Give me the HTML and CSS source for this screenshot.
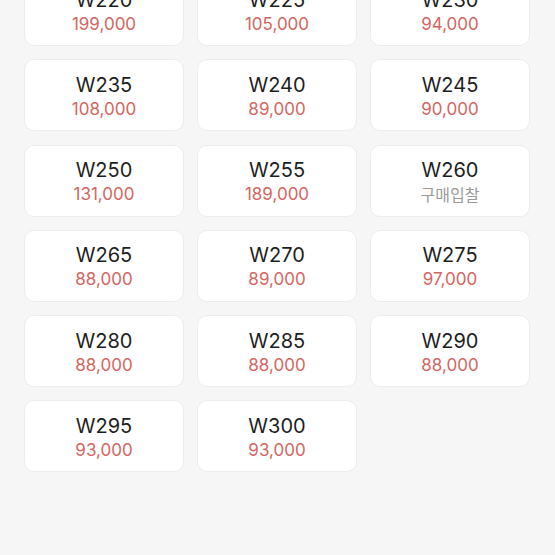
FILE: index.html
```html
<!DOCTYPE html>
<html lang="ko">
<head>
<meta charset="utf-8">
<link rel="stylesheet" href="styles.css">
</head>
<body>
<div class="grid">
  <div class="card"><div class="size">W220</div><div class="price">199,000</div></div>
  <div class="card"><div class="size">W225</div><div class="price">105,000</div></div>
  <div class="card"><div class="size">W230</div><div class="price">94,000</div></div>
  <div class="card"><div class="size">W235</div><div class="price">108,000</div></div>
  <div class="card"><div class="size">W240</div><div class="price">89,000</div></div>
  <div class="card"><div class="size">W245</div><div class="price">90,000</div></div>
  <div class="card"><div class="size">W250</div><div class="price">131,000</div></div>
  <div class="card"><div class="size">W255</div><div class="price">189,000</div></div>
  <div class="card"><div class="size">W260</div><div class="price bid">구매입찰</div></div>
  <div class="card"><div class="size">W265</div><div class="price">88,000</div></div>
  <div class="card"><div class="size">W270</div><div class="price">89,000</div></div>
  <div class="card"><div class="size">W275</div><div class="price">97,000</div></div>
  <div class="card"><div class="size">W280</div><div class="price">88,000</div></div>
  <div class="card"><div class="size">W285</div><div class="price">88,000</div></div>
  <div class="card"><div class="size">W290</div><div class="price">88,000</div></div>
  <div class="card"><div class="size">W295</div><div class="price">93,000</div></div>
  <div class="card"><div class="size">W300</div><div class="price">93,000</div></div>
</div>
</body>
</html>
```
FILE: styles.css
```css
html, body {
  margin: 0;
  padding: 0;
  background: #f6f6f6;
  height: 555px;
  overflow: hidden;
}
body {
  font-family: Inter, "Noto Sans", "Noto Sans CJK KR", sans-serif;
}
.grid {
  display: grid;
  grid-template-columns: repeat(3, 160px);
  grid-auto-rows: 72px;
  column-gap: 13px;
  row-gap: 13.25px;
  padding-left: 24px;
  margin-top: -26px;
}
.card {
  background: #fff;
  border: 1px solid #ececec;
  border-radius: 10px;
  box-sizing: border-box;
  display: flex;
  flex-direction: column;
  align-items: center;
  justify-content: center;
  padding-top: 1px;
}
.size {
  font-size: 20px;
  line-height: 24px;
  color: #1e1e1e;
}
.price {
  font-size: 17px;
  line-height: 20px;
  color: #d4665f;
  margin-top: 2px;
}
.price.bid {
  color: #9a9a9a;
  font-size: 16px;
  font-family: "Noto Sans CJK KR", sans-serif;
}
```
